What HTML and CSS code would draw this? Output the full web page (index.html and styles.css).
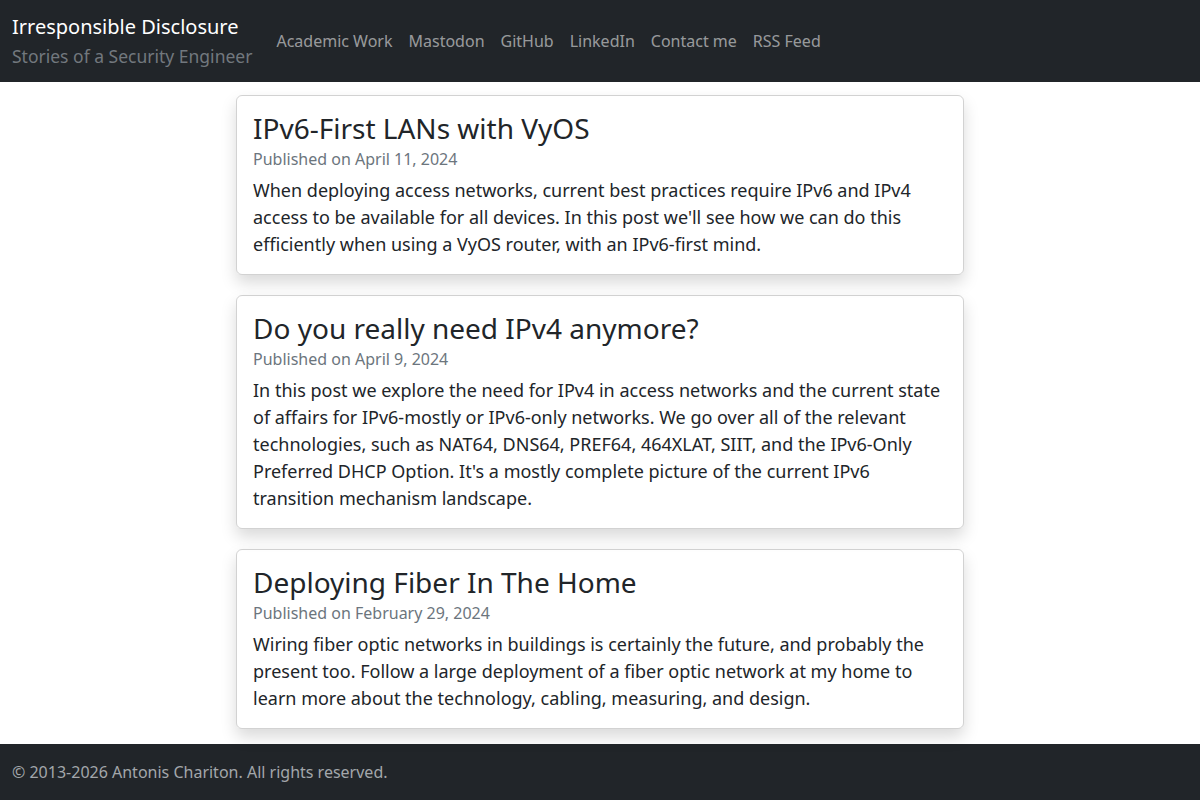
FILE: index.html
```html
<!DOCTYPE html>
<html lang="en">
<head>
    <meta charset="UTF-8">
    <meta name="viewport" content="width=device-width, initial-scale=1.0">
    <title>Irresponsible Disclosure</title>
    <link rel="stylesheet" href="styles.css">
</head>
<body>
    <!-- Navbar -->
    <nav class="navbar">
        <a class="brand" href="#">
            <span class="brand-title">Irresponsible Disclosure</span>
            <span class="brand-sub">Stories of a Security Engineer</span>
        </a>
        <ul class="nav">
            <li><a href="#">Academic Work</a></li>
            <li><a href="#">Mastodon</a></li>
            <li><a href="#">GitHub</a></li>
            <li><a href="#">LinkedIn</a></li>
            <li><a href="#">Contact me</a></li>
            <li><a href="#">RSS Feed</a></li>
        </ul>
    </nav>

    <!-- Posts -->
    <main class="posts">
        <article class="card">
            <h3 class="card-title">IPv6-First LANs with VyOS</h3>
            <p class="meta">Published on April 11, 2024</p>
            <p class="summary">When deploying access networks, current best practices require IPv6 and IPv4 access to be available for all devices. In this post we'll see how we can do this efficiently when using a VyOS router, with an IPv6-first mind.</p>
        </article>
        <article class="card">
            <h3 class="card-title">Do you really need IPv4 anymore?</h3>
            <p class="meta">Published on April 9, 2024</p>
            <p class="summary">In this post we explore the need for IPv4 in access networks and the current state of affairs for IPv6-mostly or IPv6-only networks. We go over all of the relevant technologies, such as NAT64, DNS64, PREF64, 464XLAT, SIIT, and the IPv6-Only Preferred DHCP Option. It's a mostly complete picture of the current IPv6 transition mechanism landscape.</p>
        </article>
        <article class="card">
            <h3 class="card-title">Deploying Fiber In The Home</h3>
            <p class="meta">Published on February 29, 2024</p>
            <p class="summary">Wiring fiber optic networks in buildings is certainly the future, and probably the present too. Follow a large deployment of a fiber optic network at my home to learn more about the technology, cabling, measuring, and design.</p>
        </article>
    </main>

    <!-- Footer -->
    <footer class="footer">
        <span>&copy; 2013-2026 Antonis Chariton. All rights reserved.</span>
    </footer>
</body>
</html>
```

FILE: styles.css
```css
/* Base */
body {
    font-family: 'Noto Sans', 'Open Sans', sans-serif;
    margin: 0;
    color: #212529;
    background: #fff;
}
a {
    text-decoration: none;
}

/* Navbar */
.navbar {
    background: #212529;
    display: flex;
    align-items: center;
    padding: 12px;
}
.brand {
    display: flex;
    flex-direction: column;
    margin-right: 16px;
}
.brand-title {
    color: #fff;
    font-size: 20px;
    line-height: 30px;
}
.brand-sub {
    color: #72787e;
    font-size: 17.5px;
    line-height: 28px;
}
.nav {
    display: flex;
    list-style: none;
    margin: 0;
    padding: 0;
}
.nav a {
    display: block;
    padding: 8px;
    font-size: 16px;
    line-height: 24px;
    color: rgba(255, 255, 255, 0.55);
}

/* Posts */
.posts {
    width: 728px;
    margin: 13px auto 0;
    padding-bottom: 15px;
    display: flex;
    flex-direction: column;
    gap: 20.5px;
}
.card {
    border: 1px solid rgba(0, 0, 0, 0.175);
    border-radius: 6px;
    box-shadow: 0 8px 16px rgba(0, 0, 0, 0.15);
    padding: 16px;
}
.card-title {
    font-size: 28px;
    font-weight: 400;
    line-height: 1.2;
    margin: 0 0 1px;
}
.meta {
    font-size: 16px;
    line-height: 24px;
    color: #6c757d;
    margin: 0 0 6px;
}
.summary {
    font-size: 18px;
    line-height: 27px;
    margin: 0;
}

/* Footer */
.footer {
    background: #212529;
    color: #a3a7ab;
    font-size: 16px;
    line-height: 24px;
    padding: 16px 12px;
}
```
